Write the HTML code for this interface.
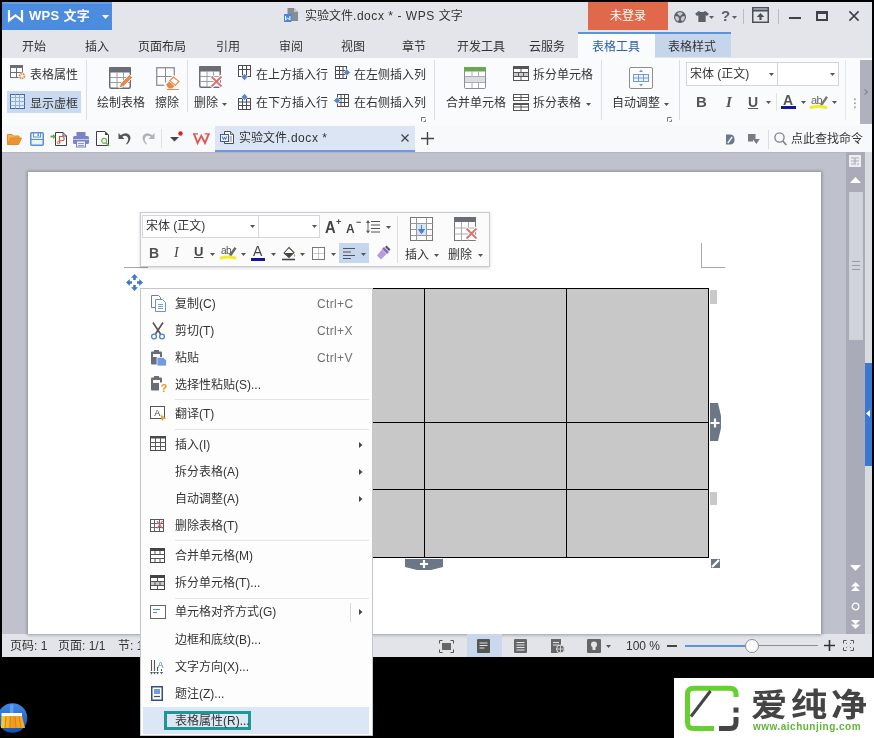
<!DOCTYPE html>
<html lang="zh-CN">
<head>
<meta charset="utf-8">
<title>实验文件.docx * - WPS 文字</title>
<style>
*{box-sizing:border-box;margin:0;padding:0}
html,body{width:874px;height:738px;overflow:hidden;background:#000}
body{position:relative;font-family:"Liberation Sans","Noto Sans CJK SC",sans-serif;font-size:12px;color:#333;line-height:1}
.a{position:absolute}
.t{position:absolute;white-space:nowrap;line-height:16px;height:16px}
svg{position:absolute;overflow:visible}
#root{position:absolute;left:0;top:0;width:874px;height:738px;will-change:transform}
.l{letter-spacing:0.55px}</style>
</head>
<body>
<div id="root">
<div class="a" style="left:2px;top:2px;width:870px;height:28px;background:#e4e5ea"></div>
<div class="a" style="left:2px;top:30px;width:870px;height:28px;background:#e4e5ea"></div>
<div class="a" style="left:2px;top:58px;width:870px;height:67px;background:#fafbfc"></div>
<div class="a" style="left:2px;top:125px;width:870px;height:27px;background:#f8f9fa"></div>
<div class="a" style="left:2px;top:152px;width:870px;height:482px;background:#bfc2cc;border-top:1px solid #b3b6be"></div>
<div class="a" style="left:2px;top:634px;width:870px;height:23px;background:#e3e4e9"></div>
<div class="a" style="left:2px;top:2px;width:110px;height:28px;background:#4c8cde;border-top:2px solid #669de3"></div>
<svg style="left:8px;top:10px" width="15" height="12" viewBox="0 0 15 12"><path d="M1 0 V10.5 L7.5 5.5 L14 10.5 V0" fill="none" stroke="#fff" stroke-width="2.2" stroke-linejoin="miter"/></svg>
<div class="t" style="left:29px;top:8px;color:#fff;font-size:13px;font-weight:bold;letter-spacing:0.3px">WPS 文字</div>
<svg style="left:102px;top:15px" width="7" height="4" viewBox="0 0 7 4"><path d="M0 0H7L3.5 4Z" fill="#fff"/></svg>
<svg style="left:284px;top:8px" width="14" height="14" viewBox="0 0 14 14"><path d="M3.5 0H10L14 4V13H3.5Z" fill="#868b98"/><path d="M10 0V4H14Z" fill="#c3c6cf"/><rect x="0" y="6" width="7.5" height="8" fill="#4a86d8"/><path d="M1.6 8 V12 L3.75 10 L5.9 12 V8" fill="none" stroke="#fff" stroke-width="1"/></svg>
<div class="t" style="left:305px;top:8px;color:#333">实验文件<span class="l">.docx * - WPS </span>文字</div>
<div class="a" style="left:588px;top:2px;width:80px;height:28px;background:#e0694c"></div>
<div class="t" style="left:588px;width:80px;text-align:center;top:8px;color:#fff">未登录</div>
<svg style="left:674px;top:11px" width="12" height="12" viewBox="0 0 12 12"><circle cx="6" cy="6" r="6" fill="#5b5f68"/><path d="M6 6 L3.2 2.2 A4.8 4.8 0 0 1 8.8 2.2Z M6 6 L10.6 5 A4.8 4.8 0 0 1 8 10.4Z M6 6 L4 10.4 A4.8 4.8 0 0 1 1.4 5Z" fill="#dfe0e6" opacity="0.85"/><circle cx="6" cy="6" r="1.6" fill="#5b5f68"/></svg>
<svg style="left:695px;top:11px" width="14" height="11" viewBox="0 0 15 12"><path d="M4 0 L6 1.2 H9 L11 0 L15 3 L13 5.5 L11.5 4.5 V12 H3.5 V4.5 L2 5.5 L0 3 Z" fill="#5b5f68"/></svg>
<svg style="left:709px;top:16px" width="5" height="3" viewBox="0 0 5 3"><path d="M0 0H5L2.5 3Z" fill="#5b5f68"/></svg>
<div class="t" style="left:721px;top:8px;font-size:15px;font-weight:bold;color:#5b5f68">?</div>
<svg style="left:732px;top:16px" width="5" height="3" viewBox="0 0 5 3"><path d="M0 0H5L2.5 3Z" fill="#5b5f68"/></svg>
<div class="a" style="left:743px;top:9px;width:1px;height:15px;background:#b9bcc4"></div>
<svg style="left:752px;top:7px" width="17" height="16" viewBox="0 0 17 16"><rect x="0.75" y="0.75" width="15.5" height="14.5" fill="none" stroke="#4d5058" stroke-width="1.5"/><path d="M1 3.5H16" stroke="#4d5058" stroke-width="2"/><path d="M8.5 6 L12.3 10 H9.6 V13 H7.4 V10 H4.7Z" fill="#4d5058"/></svg>
<div class="a" style="left:778px;top:9px;width:1px;height:15px;background:#b9bcc4"></div>
<div class="a" style="left:789px;top:17px;width:12px;height:2px;background:#3f4249"></div>
<div class="a" style="left:816px;top:11px;width:12px;height:10px;border:2px solid #3f4249;border-top-width:3px"></div>
<svg style="left:849px;top:11px" width="10" height="10" viewBox="0 0 12 12"><path d="M0.5 0.5L11.5 11.5M11.5 0.5L0.5 11.5" stroke="#3f4249" stroke-width="1.9"/></svg>
<div class="a" style="left:578px;top:32px;width:153px;height:2px;background:#5b93dc"></div>
<div class="a" style="left:578px;top:34px;width:77px;height:24px;background:#fafbfc"></div>
<div class="a" style="left:655px;top:34px;width:76px;height:23px;background:#c4d5ec"></div>
<div class="t" style="left:22px;top:39px;color:#333">开始</div>
<div class="t" style="left:85px;top:39px;color:#333">插入</div>
<div class="t" style="left:138px;top:39px;color:#333">页面布局</div>
<div class="t" style="left:216px;top:39px;color:#333">引用</div>
<div class="t" style="left:279px;top:39px;color:#333">审阅</div>
<div class="t" style="left:341px;top:39px;color:#333">视图</div>
<div class="t" style="left:402px;top:39px;color:#333">章节</div>
<div class="t" style="left:457px;top:39px;color:#333">开发工具</div>
<div class="t" style="left:529px;top:39px;color:#333">云服务</div>
<div class="t" style="left:592px;top:39px;color:#2a5daa">表格工具</div>
<div class="t" style="left:668px;top:39px;color:#333">表格样式</div>
<svg style="left:10px;top:65px" width="17" height="15" viewBox="0 0 17 15"><rect x="0.5" y="0.5" width="12" height="12" fill="#fff" stroke="#6a6d75"/><rect x="0" y="0" width="13" height="3" fill="#6a6d75"/><path d="M0.5 7.5H12.5M6.5 3V12.5" stroke="#6a6d75" fill="none"/><circle cx="12" cy="11" r="3.6" fill="#fafbfc"/><circle cx="12" cy="11" r="2.4" fill="#fff" stroke="#e8893f" stroke-width="1.8" stroke-dasharray="1.6 0.6"/></svg>
<div class="t" style="left:30px;top:67px;">表格属性</div>
<div class="a" style="left:7px;top:91px;width:74px;height:22px;background:#c9d9ef"></div>
<svg style="left:10px;top:94px" width="15" height="15" viewBox="0 0 15 15"><rect x="0.5" y="0.5" width="14" height="14" fill="#e3ecfa" stroke="#4566a0"/><path d="M5.5 0.5V14.5M9.5 0.5V14.5M0.5 3.5H14.5M0.5 7.5H14.5M0.5 11.5H14.5" stroke="#8fb0e0" fill="none" stroke-width="1"/></svg>
<div class="t" style="left:30px;top:96px;">显示虚框</div>
<div class="a" style="left:86px;top:60px;width:1px;height:60px;background:#dcdee3"></div>
<svg style="left:109px;top:67px" width="23" height="22" viewBox="0 0 23 22"><rect x="0.75" y="0.75" width="20.5" height="20.5" rx="1.5" fill="#fff" stroke="#6a6d75" stroke-width="1.5"/><rect x="0" y="0" width="22" height="5.5" rx="1" fill="#6a6d75"/><path d="M1 10.5H21M1 15.5H21M8 5V21M14.5 5V21" stroke="#9a9da5" fill="none"/><path d="M10 21 L11.5 16.5 L20.5 7.5 L23.5 10.5 L14.5 19.5Z" fill="#e8894a" stroke="#fff" stroke-width="0.8"/></svg>
<div class="t" style="left:97px;top:95px;">绘制表格</div>
<svg style="left:156px;top:67px" width="24" height="23" viewBox="0 0 24 23"><rect x="0.75" y="0.75" width="17.5" height="17.5" fill="#fff" stroke="#8a8d95" stroke-width="1.3"/><path d="M1 9.5H18M9.5 1V18" stroke="#8a8d95" fill="none"/><path d="M9 17.5 L17.5 9 L23.5 13.5 L16 21.5 H12Z" fill="#fff" stroke="#fff" stroke-width="2"/><path d="M10 17.5 L13 14.5 L18.5 19 L16 21.5 H12.5Z" fill="#e8894a"/><path d="M13.8 13.7 L17.5 10 L23 14.5 L19.3 18.3Z" fill="#fdfdfd" stroke="#e8894a" stroke-width="1.2"/><path d="M11 22.5H23" stroke="#e8894a" stroke-width="1"/></svg>
<div class="t" style="left:155px;top:95px;">擦除</div>
<div class="a" style="left:187px;top:60px;width:1px;height:52px;background:#dcdee3"></div>
<svg style="left:199px;top:66px" width="24" height="23" viewBox="0 0 24 23"><rect x="0.75" y="0.75" width="20.5" height="20.5" rx="1.5" fill="#fff" stroke="#6a6d75" stroke-width="1.5"/><rect x="0" y="0" width="22" height="5.5" rx="1" fill="#6a6d75"/><path d="M1 10.5H21M1 15.5H21M8 5V21M14.5 5V21" stroke="#9a9da5" fill="none"/><path d="M12 10 L23 21 M23 10 L12 21" stroke="#fff" stroke-width="4"/><path d="M12.5 10.5 L22.5 20.5 M22.5 10.5 L12.5 20.5" stroke="#e07070" stroke-width="1.8"/></svg>
<div class="t" style="left:194px;top:95px;">删除</div>
<svg style="left:222px;top:103px" width="5" height="3" viewBox="0 0 5 3"><path d="M0 0H5L2.5 3Z" fill="#555"/></svg>
<svg style="left:238px;top:65px" width="14" height="16" viewBox="0 0 14 16"><rect x="0.5" y="0.5" width="12" height="11" fill="#fff" stroke="#4a4d55"/><path d="M0.5 4.5H12.5M4.5 0.5V11.5M8.5 0.5V11.5" stroke="#4a4d55" fill="none"/><path d="M6.5 8.5 L9.8 12 L6.5 15.5 L3.2 12Z" fill="#5b86c9" stroke="#fff" stroke-width="0.6"/></svg>
<div class="t" style="left:256px;top:67px;">在上方插入行</div>
<svg style="left:335px;top:66px" width="16" height="14" viewBox="0 0 16 14"><rect x="0.5" y="0.5" width="11" height="12" fill="#fff" stroke="#4a4d55"/><path d="M4.5 0.5V12.5M0.5 4.5H11.5M0.5 8.5H11.5M8 0.5V12.5" stroke="#4a4d55" fill="none"/><path d="M8.5 6.5 L12 3.2 L15.5 6.5 L12 9.8Z" fill="#5b86c9" stroke="#fff" stroke-width="0.6"/></svg>
<div class="t" style="left:354px;top:67px;">在左侧插入列</div>
<svg style="left:238px;top:93px" width="14" height="17" viewBox="0 0 14 17"><rect x="0.5" y="5.5" width="12" height="11" fill="#fff" stroke="#4a4d55"/><path d="M0.5 9H12.5M0.5 12.5H12.5M4.5 5.5V16.5M8.5 5.5V16.5" stroke="#4a4d55" fill="none"/><path d="M6.5 0.5 L9.8 4 L6.5 7.5 L3.2 4Z" fill="#5b86c9" stroke="#fff" stroke-width="0.6"/></svg>
<div class="t" style="left:256px;top:95px;">在下方插入行</div>
<svg style="left:333px;top:94px" width="17" height="14" viewBox="0 0 17 14"><rect x="4.5" y="0.5" width="11" height="12" fill="#fff" stroke="#4a4d55"/><path d="M11.5 0.5V12.5M8 0.5V12.5M4.5 4.5H15.5M4.5 8.5H15.5" stroke="#4a4d55" fill="none"/><path d="M0.5 6.5 L4 3.2 L7.5 6.5 L4 9.8Z" fill="#5b86c9" stroke="#fff" stroke-width="0.6"/></svg>
<div class="t" style="left:354px;top:95px;">在右侧插入列</div>
<svg style="left:421px;top:117px" width="5" height="5" viewBox="0 0 5 5"><path d="M0.5 4.5V0.5H4.5M2.5 4.5H4.5V2.5" fill="none" stroke="#777"/></svg>
<div class="a" style="left:434px;top:60px;width:1px;height:60px;background:#dcdee3"></div>
<svg style="left:464px;top:67px" width="22" height="22" viewBox="0 0 22 22"><rect x="0.5" y="0.5" width="21" height="21" rx="1" fill="#fff" stroke="#8a8d95"/><rect x="0" y="0" width="22" height="4.5" fill="#6aa84f"/><rect x="1" y="9.5" width="20" height="6" fill="#dcdde0"/><path d="M1 9.5H21M1 15.5H21M8 4.5V9.5M14.5 4.5V9.5M8 15.5V21M14.5 15.5V21" stroke="#a9acb3" fill="none"/></svg>
<div class="t" style="left:446px;top:95px;">合并单元格</div>
<svg style="left:513px;top:66px" width="16" height="15" viewBox="0 0 16 15"><rect x="0.5" y="0.5" width="15" height="14" fill="#fff" stroke="#555" /><rect x="0" y="0" width="16" height="3" fill="#555"/><rect x="1" y="6.5" width="14" height="4" fill="#c9cbd0"/><path d="M0.5 6.5H15.5M0.5 10.5H15.5M8 3V6.5M8 10.5V14.5M5.5 6.5V10.5M10.5 6.5V10.5" stroke="#555" fill="none"/></svg>
<div class="t" style="left:533px;top:67px;">拆分单元格</div>
<svg style="left:513px;top:94px" width="16" height="17" viewBox="0 0 16 17"><rect x="0.5" y="0.5" width="15" height="6" fill="#fff" stroke="#555"/><path d="M0.5 3.5H15.5M8 0.5V6.5" stroke="#555"/><rect x="0.5" y="9.5" width="15" height="7" fill="#fff" stroke="#555"/><path d="M0.5 13H15.5M8 9.5V16.5" stroke="#555"/><rect x="0" y="9" width="16" height="2" fill="#555"/></svg>
<div class="t" style="left:533px;top:95px;">拆分表格</div>
<svg style="left:586px;top:103px" width="5" height="3" viewBox="0 0 5 3"><path d="M0 0H5L2.5 3Z" fill="#555"/></svg>
<div class="a" style="left:601px;top:60px;width:1px;height:60px;background:#dcdee3"></div>
<svg style="left:629px;top:67px" width="24" height="22" viewBox="0 0 24 22"><rect x="0.5" y="0.5" width="23" height="21" rx="1.5" fill="#fdfdfe" stroke="#8a8d95"/><rect x="4.5" y="7.5" width="15" height="7" fill="#eef4fc" stroke="#6f9bd8"/><path d="M9.5 7.5V14.5M14.5 7.5V14.5M4.5 11H19.5" stroke="#6f9bd8" fill="none"/><path d="M12 2.5 L14 5 H10Z M12 19.5 L14 17 H10Z" fill="#6f9bd8"/></svg>
<div class="t" style="left:612px;top:95px;">自动调整</div>
<svg style="left:664px;top:103px" width="5" height="3" viewBox="0 0 5 3"><path d="M0 0H5L2.5 3Z" fill="#555"/></svg>
<svg style="left:667px;top:117px" width="5" height="5" viewBox="0 0 5 5"><path d="M0.5 4.5V0.5H4.5M2.5 4.5H4.5V2.5" fill="none" stroke="#777"/></svg>
<div class="a" style="left:679px;top:60px;width:1px;height:60px;background:#dcdee3"></div>
<div class="a" style="left:686px;top:62px;width:153px;height:24px;background:#fff;border:1px solid #d2d4da"></div>
<div class="a" style="left:777px;top:62px;width:1px;height:24px;background:#d2d4da"></div>
<div class="t" style="left:690px;top:66px;">宋体 (正文)</div>
<svg style="left:769px;top:73px" width="5" height="3" viewBox="0 0 5 3"><path d="M0 0H5L2.5 3Z" fill="#555"/></svg>
<svg style="left:830px;top:73px" width="5" height="3" viewBox="0 0 5 3"><path d="M0 0H5L2.5 3Z" fill="#555"/></svg>
<div class="t" style="left:696px;top:94px;font-weight:bold;font-size:15px;color:#555">B</div>
<div class="t" style="left:726px;top:94px;font-style:italic;font-size:15px;font-family:'Liberation Serif',serif;color:#555;font-weight:bold">I</div>
<div class="t" style="left:748px;top:94px;font-size:14px;text-decoration:underline;color:#555;font-weight:bold">U</div>
<svg style="left:766px;top:101px" width="5" height="3" viewBox="0 0 5 3"><path d="M0 0H5L2.5 3Z" fill="#555"/></svg>
<div class="a" style="left:776px;top:93px;width:1px;height:18px;background:#e2e3e8"></div>
<div class="t" style="left:783px;top:92px;font-size:14px;font-weight:bold;color:#555">A</div>
<div class="a" style="left:781px;top:106px;width:15px;height:3px;background:#15159a"></div>
<svg style="left:801px;top:101px" width="5" height="3" viewBox="0 0 5 3"><path d="M0 0H5L2.5 3Z" fill="#555"/></svg>
<div class="t" style="left:811px;top:92px;font-size:11px;color:#666;letter-spacing:-0.5px">ab</div>
<svg style="left:810px;top:94px" width="18" height="16" viewBox="0 0 18 16"><path d="M10 11 L16 2 L18 3.5 L12 12Z" fill="#777"/><path d="M1 13.5 Q8 11.5 16 13.5" stroke="#eeee2a" stroke-width="3" fill="none" stroke-linecap="round"/></svg>
<svg style="left:832px;top:101px" width="5" height="3" viewBox="0 0 5 3"><path d="M0 0H5L2.5 3Z" fill="#555"/></svg>
<div class="a" style="left:845px;top:60px;width:1px;height:60px;background:#e6e7eb"></div>
<div class="t" style="left:853px;top:95px;font-size:14px;color:#9a9ca3">⁝</div>
<div class="a" style="left:860px;top:60px;width:12px;height:64px;background:#afb2bc"></div>
<svg style="left:864px;top:89px" width="4" height="6" viewBox="0 0 4 6"><path d="M0.5 0.5L3.5 3L0.5 5.5" fill="none" stroke="#83868f" stroke-width="1.1"/></svg>
<svg style="left:7px;top:133px" width="15" height="12" viewBox="0 0 15 12"><path d="M0.5 11.5V1.5H5L6.5 3H12V5" fill="#f4b15a" stroke="#e58a22"/><path d="M0.5 11.5 L3.5 5 H14.5 L11.5 11.5Z" fill="#ee9230" stroke="#e58a22"/></svg>
<svg style="left:30px;top:132px" width="14" height="14" viewBox="0 0 14 14"><rect x="0.75" y="0.75" width="12.5" height="12.5" rx="1" fill="#eaf2fc" stroke="#5b8fd6" stroke-width="1.5"/><rect x="3.5" y="1" width="7" height="4" fill="#fff" stroke="#5b8fd6"/><rect x="7.5" y="1.5" width="1.5" height="2.5" fill="#5b8fd6"/><path d="M1 7.5H13" stroke="#5b8fd6"/></svg>
<svg style="left:50px;top:131px" width="18" height="16" viewBox="0 0 18 16"><path d="M5.5 1.5H13L16.5 5V14.5H5.5Z" fill="#fff" stroke="#3d3d3d"/><path d="M13 1.5V5H16.5" fill="none" stroke="#3d3d3d" stroke-width="0.9"/><path d="M9.5 12V5.5H12Q14.2 5.5 14.2 7.6Q14.2 9.7 12 9.7H10" fill="none" stroke="#d2553f" stroke-width="1.1"/><circle cx="8.6" cy="11.6" r="1.3" fill="none" stroke="#d2553f" stroke-width="0.9"/><path d="M0.5 5.5H4.5" stroke="#5aa84a" stroke-width="1.8"/><path d="M3 3L5.8 5.5L3 8Z" fill="#5aa84a"/></svg>
<svg style="left:73px;top:132px" width="16" height="15" viewBox="0 0 16 15"><rect x="3.5" y="0" width="9" height="5" fill="#7b83c2"/><rect x="0" y="4" width="16" height="8" rx="1.5" fill="#7b83c2"/><rect x="3.5" y="9" width="9" height="6" fill="#eceefa" stroke="#7b83c2"/><path d="M5 11.5H11M5 13.5H11" stroke="#7b83c2" stroke-width="0.8"/><rect x="0" y="7" width="16" height="1" fill="#c5c9ec"/></svg>
<svg style="left:96px;top:131px" width="15" height="16" viewBox="0 0 15 16"><path d="M0.5 0.5H9L12.5 4V14.5H0.5Z" fill="#fff" stroke="#3d3d3d"/><path d="M9 0.5V4H12.5Z" fill="#3d3d3d"/><circle cx="8.2" cy="9.8" r="2.5" fill="#f4faf2" stroke="#6fb35f" stroke-width="1.2"/><path d="M10 11.7L13 15" stroke="#6fb35f" stroke-width="1.5"/></svg>
<svg style="left:118px;top:132px" width="14" height="13" viewBox="0 0 14 13"><path d="M0.5 1 V7 H6.5 L4.3 4.8 Q7 2.8 9.5 5 Q11.5 7.5 8 12 L9 12.5 Q14.5 7 11.5 3 Q8 -0.5 2.7 3.2Z" fill="#555"/></svg>
<svg style="left:141px;top:132px" width="14" height="13" viewBox="0 0 14 13"><path d="M13.5 1 V7 H7.5 L9.7 4.8 Q7 2.8 4.5 5 Q2.5 7.5 6 12 L5 12.5 Q-0.5 7 2.5 3 Q6 -0.5 11.3 3.2Z" fill="#b1b3b8"/></svg>
<div class="a" style="left:161px;top:129px;width:1px;height:19px;background:#dfe0e5"></div>
<svg style="left:170px;top:131px" width="13" height="11" viewBox="0 0 13 11"><path d="M0 6H9L4.5 10.5Z" fill="#444"/><circle cx="10.5" cy="2.5" r="2.2" fill="#e02020"/></svg>
<svg style="left:193px;top:133px" width="17" height="12" viewBox="0 0 17 12"><path d="M1 0.8 L4.6 10 L8.3 2.8 L12 10 L15.8 0.8" fill="none" stroke="#e25555" stroke-width="1.9" stroke-linejoin="miter"/><path d="M0 0.8H5M11.5 0.8H16.8" stroke="#e25555" stroke-width="1.2"/></svg>
<div class="a" style="left:215px;top:126px;width:200px;height:26px;background:#dbe5f4;border-bottom:2px solid #6a9be0"></div>
<svg style="left:220px;top:131px" width="14" height="14" viewBox="0 0 14 14"><path d="M4.5 0.5H10.5L13.5 3.5V12.5H4.5Z" fill="#fff" stroke="#4a4d55"/><path d="M10.5 0.5V3.5H13.5" fill="#c9ccd4" stroke="#4a4d55" stroke-width="0.8"/><path d="M9.5 6H12M9.5 8H12M9.5 10H12" stroke="#777" stroke-width="0.9"/><rect x="0.5" y="3.5" width="8" height="7" fill="#e8eef8" stroke="#3f5f9a"/><path d="M2.3 5.5 L3.5 8.5 L4.5 6.3 L5.5 8.5 L6.7 5.5" fill="none" stroke="#3f5f9a" stroke-width="0.9"/></svg>
<div class="t" style="left:239px;top:130px;color:#333">实验文件<span class="l">.docx *</span></div>
<svg style="left:401px;top:134px" width="8" height="8" viewBox="0 0 8 8"><path d="M0.5 0.5L7.5 7.5M7.5 0.5L0.5 7.5" stroke="#444" stroke-width="1.3"/></svg>
<svg style="left:421px;top:132px" width="13" height="13" viewBox="0 0 13 13"><path d="M6.5 0V13M0 6.5H13" stroke="#444" stroke-width="1.4"/></svg>
<svg style="left:725px;top:134px" width="10" height="11" viewBox="0 0 10 11"><path d="M1 0.5H5Q9.5 0.5 9.5 5.5Q9.5 10.5 5 10.5H1Z" fill="#6b7690"/><path d="M2.8 9 L7.2 3" stroke="#f6f7f9" stroke-width="1.3"/></svg>
<svg style="left:748px;top:134px" width="12" height="11" viewBox="0 0 12 11"><path d="M0 0H7.5V5H11.8L8.4 10L5 5.5V7.5H0Z" fill="#777b85"/></svg>
<div class="a" style="left:768px;top:130px;width:1px;height:19px;background:#dcdde2"></div>
<svg style="left:774px;top:132px" width="13" height="14" viewBox="0 0 13 14"><circle cx="5.5" cy="5.5" r="4.6" fill="none" stroke="#7d8089" stroke-width="1.3"/><path d="M8.8 9L12.3 13" stroke="#7d8089" stroke-width="1.7"/></svg>
<div class="t" style="left:791px;top:131px;color:#333">点此查找命令</div>
<div class="a" style="left:28px;top:172px;width:793px;height:462px;background:#fff;box-shadow:0 0 3px 1px rgba(100,105,115,.6)"></div>
<div class="a" style="left:701px;top:243px;width:1px;height:24px;background:#a8a8a8"></div>
<div class="a" style="left:701px;top:267px;width:24px;height:1px;background:#a8a8a8"></div>
<div class="a" style="left:124px;top:267px;width:24px;height:1px;background:#a8a8a8"></div>
<div class="a" style="left:371px;top:288px;width:338px;height:270px;background:#c8c8c8;border:1px solid #000"></div>
<div class="a" style="left:424px;top:288px;width:1px;height:270px;background:#000"></div>
<div class="a" style="left:566px;top:288px;width:1px;height:270px;background:#000"></div>
<div class="a" style="left:372px;top:422px;width:337px;height:1px;background:#000"></div>
<div class="a" style="left:372px;top:489px;width:337px;height:1px;background:#000"></div>
<div class="a" style="left:710px;top:290px;width:7px;height:14px;background:#c9c9c9"></div>
<div class="a" style="left:710px;top:492px;width:7px;height:13px;background:#c9c9c9"></div>
<svg style="left:710px;top:403px" width="11" height="38" viewBox="0 0 11 38"><path d="M0 0H8L11 13V25L8 38H0Z" fill="#6b7686"/><path d="M5 15.5V24.5M0.5 20H9.5" stroke="#fff" stroke-width="2.2"/></svg>
<svg style="left:405px;top:559px" width="38" height="11" viewBox="0 0 38 11"><path d="M0 0H38V8L26 11H12L0 8Z" fill="#6b7686"/><path d="M19 1V9M15 5H23" stroke="#fff" stroke-width="2.2"/></svg>
<svg style="left:711px;top:559px" width="9" height="9" viewBox="0 0 9 9"><rect x="0" y="0" width="9" height="9" fill="#6b7686"/><path d="M1 8L8 1" stroke="#fff" stroke-width="2.2"/></svg>
<svg style="left:126px;top:274px" width="17" height="17" viewBox="0 0 17 17"><path d="M8.5 0L12 3.8H9.8V6H7.2V3.8H5Z M8.5 17L12 13.2H9.8V11H7.2V13.2H5Z M0 8.5L3.8 5V7.2H6V9.8H3.8V12Z M17 8.5L13.2 5V7.2H11V9.8H13.2V12Z" fill="#3f7ac8"/></svg>
<div class="a" style="left:846px;top:152px;width:19px;height:482px;background:#a9acb8"></div>
<div class="a" style="left:865px;top:152px;width:7px;height:482px;background:#dadbe0"></div>
<div class="a" style="left:865px;top:363px;width:7px;height:103px;background:#3b78d2"></div>
<svg style="left:866px;top:410px" width="4" height="7" viewBox="0 0 4 7"><path d="M4 0V7L0 3.5Z" fill="#fff"/></svg>
<svg style="left:849px;top:155px" width="12" height="12" viewBox="0 0 12 12"><rect x="0" y="0" width="12" height="12" fill="#eceef2"/><path d="M2 3H10M2 6H10M6 3V10M2 9H5M8 9H10" stroke="#a9acb8" stroke-width="1.2"/></svg>
<svg style="left:850px;top:177px" width="11" height="6" viewBox="0 0 11 6"><path d="M0 6L5.5 0L11 6Z" fill="#fff"/></svg>
<div class="a" style="left:849px;top:192px;width:14px;height:148px;background:#d1d3da"></div>
<div class="a" style="left:852px;top:261px;width:8px;height:1px;background:#9a9da8"></div>
<div class="a" style="left:852px;top:265px;width:8px;height:1px;background:#9a9da8"></div>
<div class="a" style="left:852px;top:269px;width:8px;height:1px;background:#9a9da8"></div>
<svg style="left:850px;top:565px" width="11" height="6" viewBox="0 0 11 6"><path d="M0 0H11L5.5 6Z" fill="#fff"/></svg>
<svg style="left:851px;top:582px" width="9" height="9" viewBox="0 0 9 9"><path d="M0 4.5L4.5 0L9 4.5Z M0 9L4.5 4.5L9 9Z" fill="#fff"/></svg>
<svg style="left:851px;top:602px" width="9" height="9" viewBox="0 0 9 9"><circle cx="4.5" cy="4.5" r="3.3" fill="none" stroke="#fff" stroke-width="1.3"/></svg>
<svg style="left:851px;top:620px" width="9" height="9" viewBox="0 0 9 9"><path d="M0 0H9L4.5 4.5Z M0 4.5H9L4.5 9Z" fill="#fff"/></svg>
<div class="a" style="left:140px;top:212px;width:350px;height:55px;background:#fbfbfc;border:1px solid #c8cad0;box-shadow:0 1px 3px rgba(0,0,0,.18)"></div>
<div class="a" style="left:142px;top:215px;width:178px;height:23px;background:#fff;border:1px solid #d4d6dc"></div>
<div class="a" style="left:258px;top:215px;width:1px;height:23px;background:#d4d6dc"></div>
<div class="t" style="left:146px;top:218px;color:#333">宋体 (正文)</div>
<svg style="left:250px;top:225px" width="5" height="3" viewBox="0 0 5 3"><path d="M0 0H5L2.5 3Z" fill="#555"/></svg>
<svg style="left:312px;top:225px" width="5" height="3" viewBox="0 0 5 3"><path d="M0 0H5L2.5 3Z" fill="#555"/></svg>
<div class="t" style="left:325px;top:220px;font-size:16px;color:#444;font-weight:bold;transform:scaleX(.92);transform-origin:0 0">A</div>
<div class="t" style="left:336px;top:214px;font-size:9px;color:#444;font-weight:bold">+</div>
<div class="t" style="left:346px;top:221px;font-size:13px;color:#444;font-weight:bold;transform:scaleX(.92);transform-origin:0 0">A</div>
<div class="t" style="left:356px;top:214px;font-size:9px;color:#444;font-weight:bold">−</div>
<svg style="left:366px;top:220px" width="14" height="14" viewBox="0 0 14 14"><path d="M5 1.5H14M5 5H14M5 8.5H14M5 12H14" stroke="#555" stroke-width="1.1"/><path d="M2 0L4 3H0Z M2 13.5L4 10.5H0Z" fill="#555"/><path d="M2 3V10.5" stroke="#555" stroke-width="0.9"/></svg>
<svg style="left:386px;top:226px" width="5" height="3" viewBox="0 0 5 3"><path d="M0 0H5L2.5 3Z" fill="#555"/></svg>
<div class="a" style="left:397px;top:216px;width:1px;height:47px;background:#dcdee3"></div>
<div class="t" style="left:149px;top:245px;font-weight:bold;font-size:14px;color:#505050">B</div>
<div class="t" style="left:174px;top:245px;font-style:italic;font-size:14px;color:#444;font-family:'Liberation Serif',serif">I</div>
<div class="t" style="left:194px;top:244px;font-size:13px;text-decoration:underline;color:#444;font-weight:bold">U</div>
<svg style="left:210px;top:253px" width="5" height="3" viewBox="0 0 5 3"><path d="M0 0H5L2.5 3Z" fill="#555"/></svg>
<div class="t" style="left:221px;top:243px;font-size:10px;color:#555;letter-spacing:-0.5px">ab</div>
<svg style="left:220px;top:245px" width="18" height="16" viewBox="0 0 18 16"><path d="M9 10 L14.5 2 L16.5 3.5 L11 11.5Z" fill="#666"/><path d="M1 13 Q8 11 15 13" stroke="#eeee2a" stroke-width="3" fill="none" stroke-linecap="round"/></svg>
<svg style="left:241px;top:253px" width="5" height="3" viewBox="0 0 5 3"><path d="M0 0H5L2.5 3Z" fill="#555"/></svg>
<div class="t" style="left:253px;top:243px;font-size:14px;color:#444">A</div>
<div class="a" style="left:251px;top:258px;width:14px;height:3px;background:#15159a"></div>
<svg style="left:271px;top:253px" width="5" height="3" viewBox="0 0 5 3"><path d="M0 0H5L2.5 3Z" fill="#555"/></svg>
<svg style="left:281px;top:245px" width="15" height="16" viewBox="0 0 15 16"><path d="M3 8 L8 2.5 L13 7.5 L8 12.5Z" fill="#fff" stroke="#444" stroke-width="1.1"/><path d="M3.5 8H12.5L8 12.3Z" fill="#444"/><path d="M13.5 9 Q15 11 13.5 12 Q12 11 13.5 9Z" fill="#e8833a"/><path d="M1 14.5H14" stroke="#444" stroke-width="1.6"/></svg>
<svg style="left:300px;top:253px" width="5" height="3" viewBox="0 0 5 3"><path d="M0 0H5L2.5 3Z" fill="#555"/></svg>
<svg style="left:312px;top:247px" width="13" height="13" viewBox="0 0 13 13"><rect x="0.5" y="0.5" width="12" height="12" fill="#fff" stroke="#777"/><path d="M6.5 0.5V12.5M0.5 6.5H12.5" stroke="#999" stroke-dasharray="1 1"/></svg>
<svg style="left:331px;top:253px" width="5" height="3" viewBox="0 0 5 3"><path d="M0 0H5L2.5 3Z" fill="#555"/></svg>
<div class="a" style="left:339px;top:243px;width:30px;height:20px;background:#c4d7ef"></div>
<svg style="left:343px;top:248px" width="12" height="11" viewBox="0 0 12 11"><path d="M0 0.5H12M0 4H8M0 7.5H12M0 10.5H8" stroke="#555" stroke-width="1"/></svg>
<svg style="left:361px;top:253px" width="5" height="3" viewBox="0 0 5 3"><path d="M0 0H5L2.5 3Z" fill="#555"/></svg>
<svg style="left:376px;top:245px" width="15" height="16" viewBox="0 0 15 16"><path d="M8 2 L13 7 L11 9 L6 4Z" fill="#8a6bc0"/><path d="M6 4.5 L10.5 9 L5 14.5 L1 10.5Z" fill="#b59be0"/><path d="M10.5 0.5 L14.5 4.5 L13 6 L9 2Z" fill="#555"/></svg>
<svg style="left:410px;top:217px" width="23" height="24" viewBox="0 0 23 24"><rect x="0.5" y="0.5" width="22" height="23" fill="#fff" stroke="#777"/><path d="M0.5 6.5H22.5M0.5 12.5H22.5M0.5 18.5H22.5M6.5 0.5V23.5M16.5 0.5V23.5" stroke="#999"/><rect x="7" y="7" width="9" height="11" fill="#d6e4f7"/><path d="M11.5 8 V14 M8.5 12.5 L11.5 16.5 L14.5 12.5Z" fill="#4a7fd0" stroke="#4a7fd0"/></svg>
<div class="t" style="left:405px;top:247px;color:#333">插入</div>
<svg style="left:434px;top:254px" width="5" height="3" viewBox="0 0 5 3"><path d="M0 0H5L2.5 3Z" fill="#555"/></svg>
<svg style="left:454px;top:217px" width="24" height="24" viewBox="0 0 24 24"><rect x="0.5" y="0.5" width="21" height="23" fill="#fff" stroke="#777"/><rect x="0" y="0" width="22" height="5" fill="#6a6d75"/><path d="M0.5 11H21.5M0.5 17H21.5M7.5 5V23.5M14.5 5V23.5" stroke="#aaa"/><path d="M12 11 L23 22 M23 11 L12 22" stroke="#fff" stroke-width="4"/><path d="M12.5 11.5 L22.5 21.5 M22.5 11.5 L12.5 21.5" stroke="#e07070" stroke-width="1.8"/></svg>
<div class="t" style="left:448px;top:247px;color:#333">删除</div>
<svg style="left:478px;top:254px" width="5" height="3" viewBox="0 0 5 3"><path d="M0 0H5L2.5 3Z" fill="#555"/></svg>
<div class="t" style="left:10px;top:638px;">页码: 1</div>
<div class="t" style="left:58px;top:638px;">页面: 1/1</div>
<div class="t" style="left:118px;top:638px;">节: 1/1</div>
<svg style="left:439px;top:640px" width="15" height="13" viewBox="0 0 15 13"><path d="M0.5 3.5V0.5H3.5M11.5 0.5H14.5V3.5M14.5 9.5V12.5H11.5M3.5 12.5H0.5V9.5" fill="none" stroke="#555"/><rect x="3" y="3" width="9" height="7" fill="#666"/></svg>
<div class="a" style="left:467px;top:634px;width:35px;height:23px;background:#cad8ed"></div>
<svg style="left:477px;top:639px" width="13" height="14" viewBox="0 0 13 14"><rect x="0" y="0" width="13" height="14" rx="1" fill="#555"/><path d="M2.5 4H10.5M2.5 6.5H10.5M2.5 9H7.5" stroke="#dfe3ea"/></svg>
<svg style="left:514px;top:639px" width="13" height="14" viewBox="0 0 13 14"><rect x="0" y="0" width="13" height="14" rx="1" fill="#666"/><path d="M2.5 3.5H10.5M2.5 6H10.5M2.5 8.5H10.5M2.5 11H10.5" stroke="#e4e5ea"/></svg>
<svg style="left:551px;top:639px" width="14" height="14" viewBox="0 0 14 14"><path d="M0 0H10V14H0Z" fill="#666"/><path d="M2 3.5H8M2 6H8" stroke="#e4e5ea"/><circle cx="9.5" cy="10" r="4" fill="#666" stroke="#e4e5ea"/><path d="M6 10H13M9.5 6.5V13.5" stroke="#e4e5ea" stroke-width="0.8"/></svg>
<svg style="left:587px;top:639px" width="14" height="14" viewBox="0 0 14 14"><rect x="0" y="0" width="14" height="14" rx="1" fill="#666"/><circle cx="7" cy="5.5" r="3" fill="#e4e5ea"/><rect x="5.5" y="8" width="3" height="3" fill="#e4e5ea"/></svg>
<svg style="left:606px;top:645px" width="5" height="3" viewBox="0 0 5 3"><path d="M0 0H5L2.5 3Z" fill="#555"/></svg>
<div class="t" style="left:626px;top:638px;color:#333">100 %</div>
<div class="a" style="left:667px;top:645px;width:10px;height:2px;background:#444"></div>
<div class="a" style="left:685px;top:645px;width:67px;height:2px;background:#5b93dc"></div>
<div class="a" style="left:752px;top:645px;width:66px;height:1px;background:#8a8d95"></div>
<div class="a" style="left:745px;top:639px;width:14px;height:14px;background:#fbfbfc;border:1px solid #8a8d95;border-radius:7px"></div>
<svg style="left:824px;top:640px" width="11" height="11" viewBox="0 0 11 11"><path d="M5.5 0V11M0 5.5H11" stroke="#333" stroke-width="1.6"/></svg>
<svg style="left:843px;top:640px" width="11" height="11" viewBox="0 0 11 11"><path d="M0.5 3.5V0.5H3.5M7.5 0.5H10.5V3.5M10.5 7.5V10.5H7.5M3.5 10.5H0.5V7.5" fill="none" stroke="#555"/><path d="M3 3L8 8M8 3L3 8" stroke="#555" stroke-width="0.8" stroke-dasharray="1.5 4"/></svg>
<div class="a" style="left:140px;top:288px;width:233px;height:448px;background:#fdfdfd;border:1px solid #c4c6cb"></div>
<div class="a" style="left:143px;top:707px;width:226px;height:27px;background:#dce7f6"></div>
<div class="a" style="left:164px;top:711px;width:87px;height:19px;border:3px solid #1f9794"></div>
<div class="t" style="left:175px;top:296px;color:#333">复制(C)</div>
<div class="t" style="left:317px;top:296px;color:#707070;letter-spacing:0.35px">Ctrl+C</div>
<div class="t" style="left:175px;top:323px;color:#333">剪切(T)</div>
<div class="t" style="left:317px;top:323px;color:#707070;letter-spacing:0.35px">Ctrl+X</div>
<div class="t" style="left:175px;top:350px;color:#333">粘贴</div>
<div class="t" style="left:317px;top:350px;color:#707070;letter-spacing:0.35px">Ctrl+V</div>
<div class="t" style="left:175px;top:377px;color:#333">选择性粘贴(S)...</div>
<div class="t" style="left:175px;top:406px;color:#333">翻译(T)</div>
<div class="t" style="left:175px;top:437px;color:#333">插入(I)</div>
<svg style="left:359px;top:442px" width="4" height="6" viewBox="0 0 4 6"><path d="M0 0L3.5 3L0 6Z" fill="#444"/></svg>
<div class="t" style="left:175px;top:464px;color:#333">拆分表格(A)</div>
<svg style="left:359px;top:469px" width="4" height="6" viewBox="0 0 4 6"><path d="M0 0L3.5 3L0 6Z" fill="#444"/></svg>
<div class="t" style="left:175px;top:491px;color:#333">自动调整(A)</div>
<svg style="left:359px;top:496px" width="4" height="6" viewBox="0 0 4 6"><path d="M0 0L3.5 3L0 6Z" fill="#444"/></svg>
<div class="t" style="left:175px;top:518px;color:#333">删除表格(T)</div>
<div class="t" style="left:175px;top:548px;color:#333">合并单元格(M)</div>
<div class="t" style="left:175px;top:575px;color:#333">拆分单元格(T)...</div>
<div class="t" style="left:175px;top:604px;color:#333">单元格对齐方式(G)</div>
<svg style="left:359px;top:609px" width="4" height="6" viewBox="0 0 4 6"><path d="M0 0L3.5 3L0 6Z" fill="#444"/></svg>
<div class="t" style="left:175px;top:632px;color:#333">边框和底纹(B)...</div>
<div class="t" style="left:175px;top:659px;color:#333">文字方向(X)...</div>
<div class="t" style="left:175px;top:686px;color:#333">题注(Z)...</div>
<div class="t" style="left:175px;top:713px;color:#333">表格属性(R)...</div>
<div class="a" style="left:175px;top:399px;width:194px;height:1px;background:#e3e4e8"></div>
<div class="a" style="left:175px;top:429px;width:194px;height:1px;background:#e3e4e8"></div>
<div class="a" style="left:175px;top:540px;width:194px;height:1px;background:#e3e4e8"></div>
<div class="a" style="left:175px;top:598px;width:194px;height:1px;background:#e3e4e8"></div>
<div class="a" style="left:350px;top:603px;width:1px;height:19px;background:#d8dae0"></div>
<svg style="left:151px;top:295px" width="15" height="17" viewBox="0 0 15 17"><path d="M0.5 0.5H7.5L9.5 2.5V12.5H0.5Z" fill="#fff" stroke="#7a7d85"/><path d="M4.5 4.5H11.5L14.5 7.5V16.5H4.5Z" fill="#fff" stroke="#6f93c8"/><path d="M7 9.5H12M7 11.5H12M7 13.5H12" stroke="#6f93c8" stroke-width="0.9"/></svg>
<svg style="left:151px;top:322px" width="14" height="18" viewBox="0 0 14 18"><path d="M2 0.5 L9.5 12 M12 0.5 L4.5 12" stroke="#555" stroke-width="1.6" fill="none"/><circle cx="3" cy="14.5" r="2.4" fill="none" stroke="#4a7fd0" stroke-width="1.3"/><circle cx="11" cy="14.5" r="2.4" fill="none" stroke="#4a7fd0" stroke-width="1.3"/></svg>
<svg style="left:151px;top:350px" width="16" height="16" viewBox="0 0 16 16"><rect x="0" y="1.5" width="11" height="13" rx="1" fill="#6a6d75"/><rect x="3" y="0" width="5" height="3" fill="#6a6d75"/><rect x="2" y="4" width="7" height="3" fill="#fdfdfd"/><path d="M6 7.5H12.5L15.5 10.5V16H6Z" fill="#6f9be0" stroke="#fdfdfd" stroke-width="0.8"/></svg>
<svg style="left:151px;top:376px" width="16" height="17" viewBox="0 0 16 17"><rect x="0" y="1.5" width="11" height="13" rx="1" fill="#6a6d75"/><rect x="3" y="0" width="5" height="3" fill="#6a6d75"/><rect x="2" y="4" width="7" height="3" fill="#fdfdfd"/><rect x="8" y="6.5" width="8" height="10.5" fill="#fdfdfd"/><text x="9.5" y="16" font-size="11" font-weight="bold" fill="#e8962a" font-family="Liberation Sans,sans-serif">?</text></svg>
<svg style="left:150px;top:406px" width="17" height="16" viewBox="0 0 17 16"><rect x="0.5" y="0.5" width="14" height="12" fill="#fff" stroke="#555"/><text x="4.2" y="10" font-size="9" fill="#444" font-family="Liberation Sans,sans-serif">A</text><path d="M10.5 8.5 L16.5 12.5 L13.5 13 L12 15.5Z" fill="#e8a23a"/></svg>
<svg style="left:150px;top:436px" width="16" height="15" viewBox="0 0 16 15"><rect x="0.5" y="0.5" width="15" height="14" fill="#fff" stroke="#4a4a4a"/><rect x="0" y="0" width="16" height="2.5" fill="#4a4a4a"/><path d="M0.5 6.5H15.5M0.5 10.5H15.5M5.5 2V14.5M10.5 2V14.5" stroke="#5a5a5a"/></svg>
<svg style="left:150px;top:519px" width="14" height="13" viewBox="0 0 14 13"><rect x="0.5" y="0.5" width="13" height="12" fill="#fff" stroke="#555"/><path d="M0.5 4.5H13.5M0.5 8.5H13.5M4.5 0.5V12.5M9.5 0.5V12.5" stroke="#666"/><path d="M7 2L12.5 9.5M12.5 2L7 9.5" stroke="#e05a5a" stroke-width="1.2"/></svg>
<svg style="left:150px;top:548px" width="15" height="15" viewBox="0 0 15 15"><rect x="0.5" y="0.5" width="14" height="14" fill="#fff" stroke="#444"/><rect x="0" y="0" width="15" height="3" fill="#444"/><path d="M0.5 6.5H14.5M0.5 10.5H14.5M5 10.5V14.5M10 10.5V14.5M5 3V6.5M10 3V6.5" stroke="#555"/></svg>
<svg style="left:150px;top:575px" width="15" height="15" viewBox="0 0 15 15"><rect x="0.5" y="0.5" width="14" height="14" fill="#fff" stroke="#444"/><rect x="0" y="0" width="15" height="3" fill="#444"/><rect x="1" y="6.5" width="13" height="4" fill="#c5c7cc"/><path d="M0.5 6.5H14.5M0.5 10.5H14.5M7.5 3V6.5M7.5 10.5V14.5M5 6.5V10.5M10 6.5V10.5" stroke="#555"/></svg>
<svg style="left:150px;top:605px" width="16" height="14" viewBox="0 0 16 14"><rect x="0.5" y="0.5" width="15" height="13" fill="#fff" stroke="#666"/><path d="M3 4.5H10M3 7.5H7" stroke="#5b86c9" stroke-width="1"/></svg>
<svg style="left:150px;top:659px" width="15" height="16" viewBox="0 0 15 16"><path d="M1.5 1V12M4.5 1V12M7.5 8V12" stroke="#555" stroke-width="1.1"/><path d="M1.5 15.5L0 13H3Z M4.5 15.5L3 13H6Z M7.5 15.5L6 13H9Z M11.5 15.5L10 13H13Z" fill="#555"/><text x="7.5" y="8.5" font-size="9" fill="#4a7fd0" font-family="Liberation Sans,sans-serif">A</text><path d="M11.5 10V12" stroke="#555"/></svg>
<svg style="left:151px;top:686px" width="12" height="15" viewBox="0 0 12 15"><rect x="0.75" y="0.75" width="10.5" height="13.5" fill="#fff" stroke="#3b4a7a" stroke-width="1.5"/><rect x="3" y="3" width="6" height="5" fill="#6f9be0"/><path d="M3 10.5H9" stroke="#3b4a7a" stroke-width="1.2"/></svg>
<div class="a" style="left:674px;top:678px;width:200px;height:60px;background:#fff"></div>
<svg style="left:674px;top:678px" width="70" height="60" viewBox="0 0 70 60"><path d="M62 19V16.2Q62 10.2 56 10.2H19.5Q13.5 10.2 13.5 16.2V44.5Q13.5 50.5 19.5 50.5H40" fill="none" stroke="#66d12e" stroke-width="5"/><path d="M45 50.5H56Q62 50.5 62 44.5V39" fill="none" stroke="#454545" stroke-width="5"/><path d="M62 29.5V34.6" stroke="#454545" stroke-width="5"/><path d="M17 38.5L36.5 13" stroke="#454545" stroke-width="3"/></svg>
<div class="t" style="left:751px;top:686px;font-size:32px;line-height:38px;height:38px;color:#444;letter-spacing:3.4px;font-weight:700;transform:scaleX(1.13);transform-origin:0 0">爱纯净</div>
<div class="t" id="url" style="left:753px;top:719px;font-size:10px;font-weight:bold;color:#62b53a;letter-spacing:0.5px">www.aichunjing.com</div>
<svg style="left:0px;top:702px" width="28" height="32" viewBox="0 0 28 32"><defs><linearGradient id="bg1" x1="0" y1="0" x2="0" y2="1"><stop offset="0" stop-color="#3f8ae8"/><stop offset="1" stop-color="#1450b0"/></linearGradient><linearGradient id="bg2" x1="0" y1="0" x2="1" y2="0"><stop offset="0" stop-color="#f7d23a"/><stop offset="0.5" stop-color="#f09a1c"/><stop offset="1" stop-color="#f3b12c"/></linearGradient></defs><circle cx="12.5" cy="16" r="14.8" fill="url(#bg1)"/><path d="M10 2.5H13.5V11H10Z" fill="#5f9ff0"/><path d="M1.5 11H22V14H1.5Z" fill="#fafafa"/><path d="M1.5 14H22L25 26H1Z" fill="url(#bg2)"/><path d="M6 14.5L5 26M10.5 14.5L10 26M15 14.5L16 26M19 14.5L21 26" stroke="#d8801a" stroke-width="1"/></svg>
</div>
</body>
</html>
